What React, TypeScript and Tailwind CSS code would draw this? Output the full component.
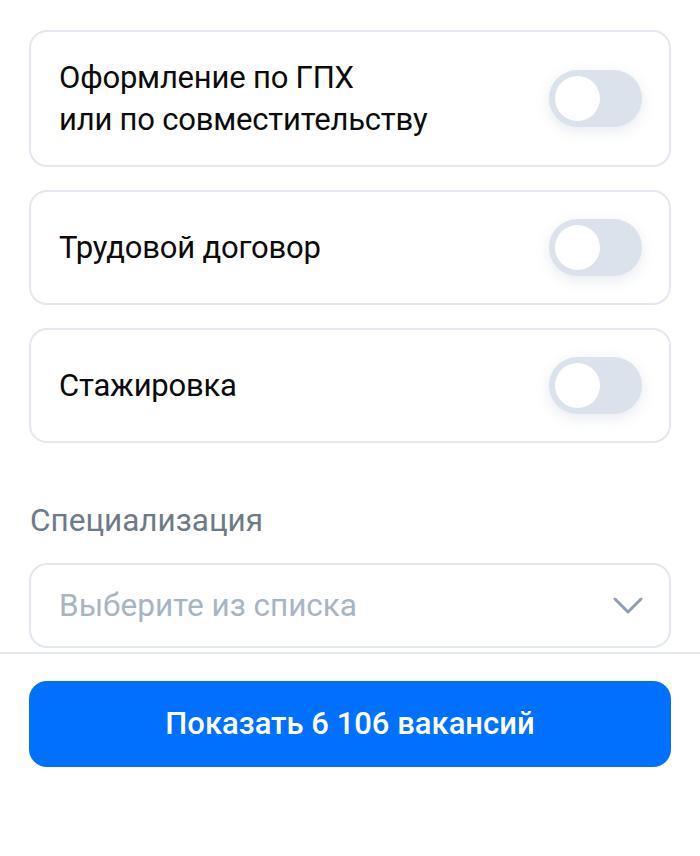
import React from "react";

function Toggle() {
  return (
    <div className="w-[93px] h-[57px] rounded-full bg-[#dbe2eb] p-[6px] flex items-center shadow-[0_4px_14px_rgba(120,140,170,0.18)] shrink-0">
      <div className="w-[45px] h-[45px] rounded-full bg-white" />
    </div>
  );
}

function Row({ children, tall }: { children: React.ReactNode; tall?: boolean }) {
  return (
    <div
      className={`flex items-center justify-between rounded-[18px] border-2 border-[#e3e8f0] pl-[28px] pr-[27px] ${
        tall ? "h-[137px]" : "h-[115px]"
      }`}
    >
      <div className="text-[31px] leading-[42px] text-[#0b0b0b] tracking-[-0.2px]">{children}</div>
      <Toggle />
    </div>
  );
}

export default function App() {
  return (
    <div
      className="w-[700px] h-[856px] bg-white overflow-hidden"
      style={{ fontFamily: "Roboto, 'Noto Sans', sans-serif" }}
    >
      <div className="px-[29px] pt-[30px] flex flex-col gap-[23px]">
        <Row tall>
          Оформление по ГПХ
          <br />
          или по совместительству
        </Row>
        <Row>Трудовой договор</Row>
        <Row>Стажировка</Row>
      </div>
      <div className="px-[29px] pt-[62px]">
        <div className="text-[31.5px] leading-[32px] text-[#6d7a88] pl-[1px]">Специализация</div>
        <div className="mt-[26px] h-[85px] rounded-[18px] border-2 border-[#e3e8f0] flex items-center justify-between pl-[28px] pr-[26px]">
          <span className="text-[31.5px] text-[#a7b4c2]">Выберите из списка</span>
          <svg width="30" height="18" viewBox="0 0 30 18" fill="none">
            <path d="M2 2 L15 15 L28 2" stroke="#8d9fb2" strokeWidth="3" strokeLinecap="round" strokeLinejoin="round" />
          </svg>
        </div>
      </div>
      <div className="mt-[4px] h-[2px] bg-[#e3e8f0]" />
      <div className="px-[29px] pt-[27px]">
        <button className="w-full h-[86px] rounded-[18px] bg-[#0070ff] text-white text-[31px] font-medium flex items-center justify-center">
          Показать 6 106 вакансий
        </button>
      </div>
    </div>
  );
}
